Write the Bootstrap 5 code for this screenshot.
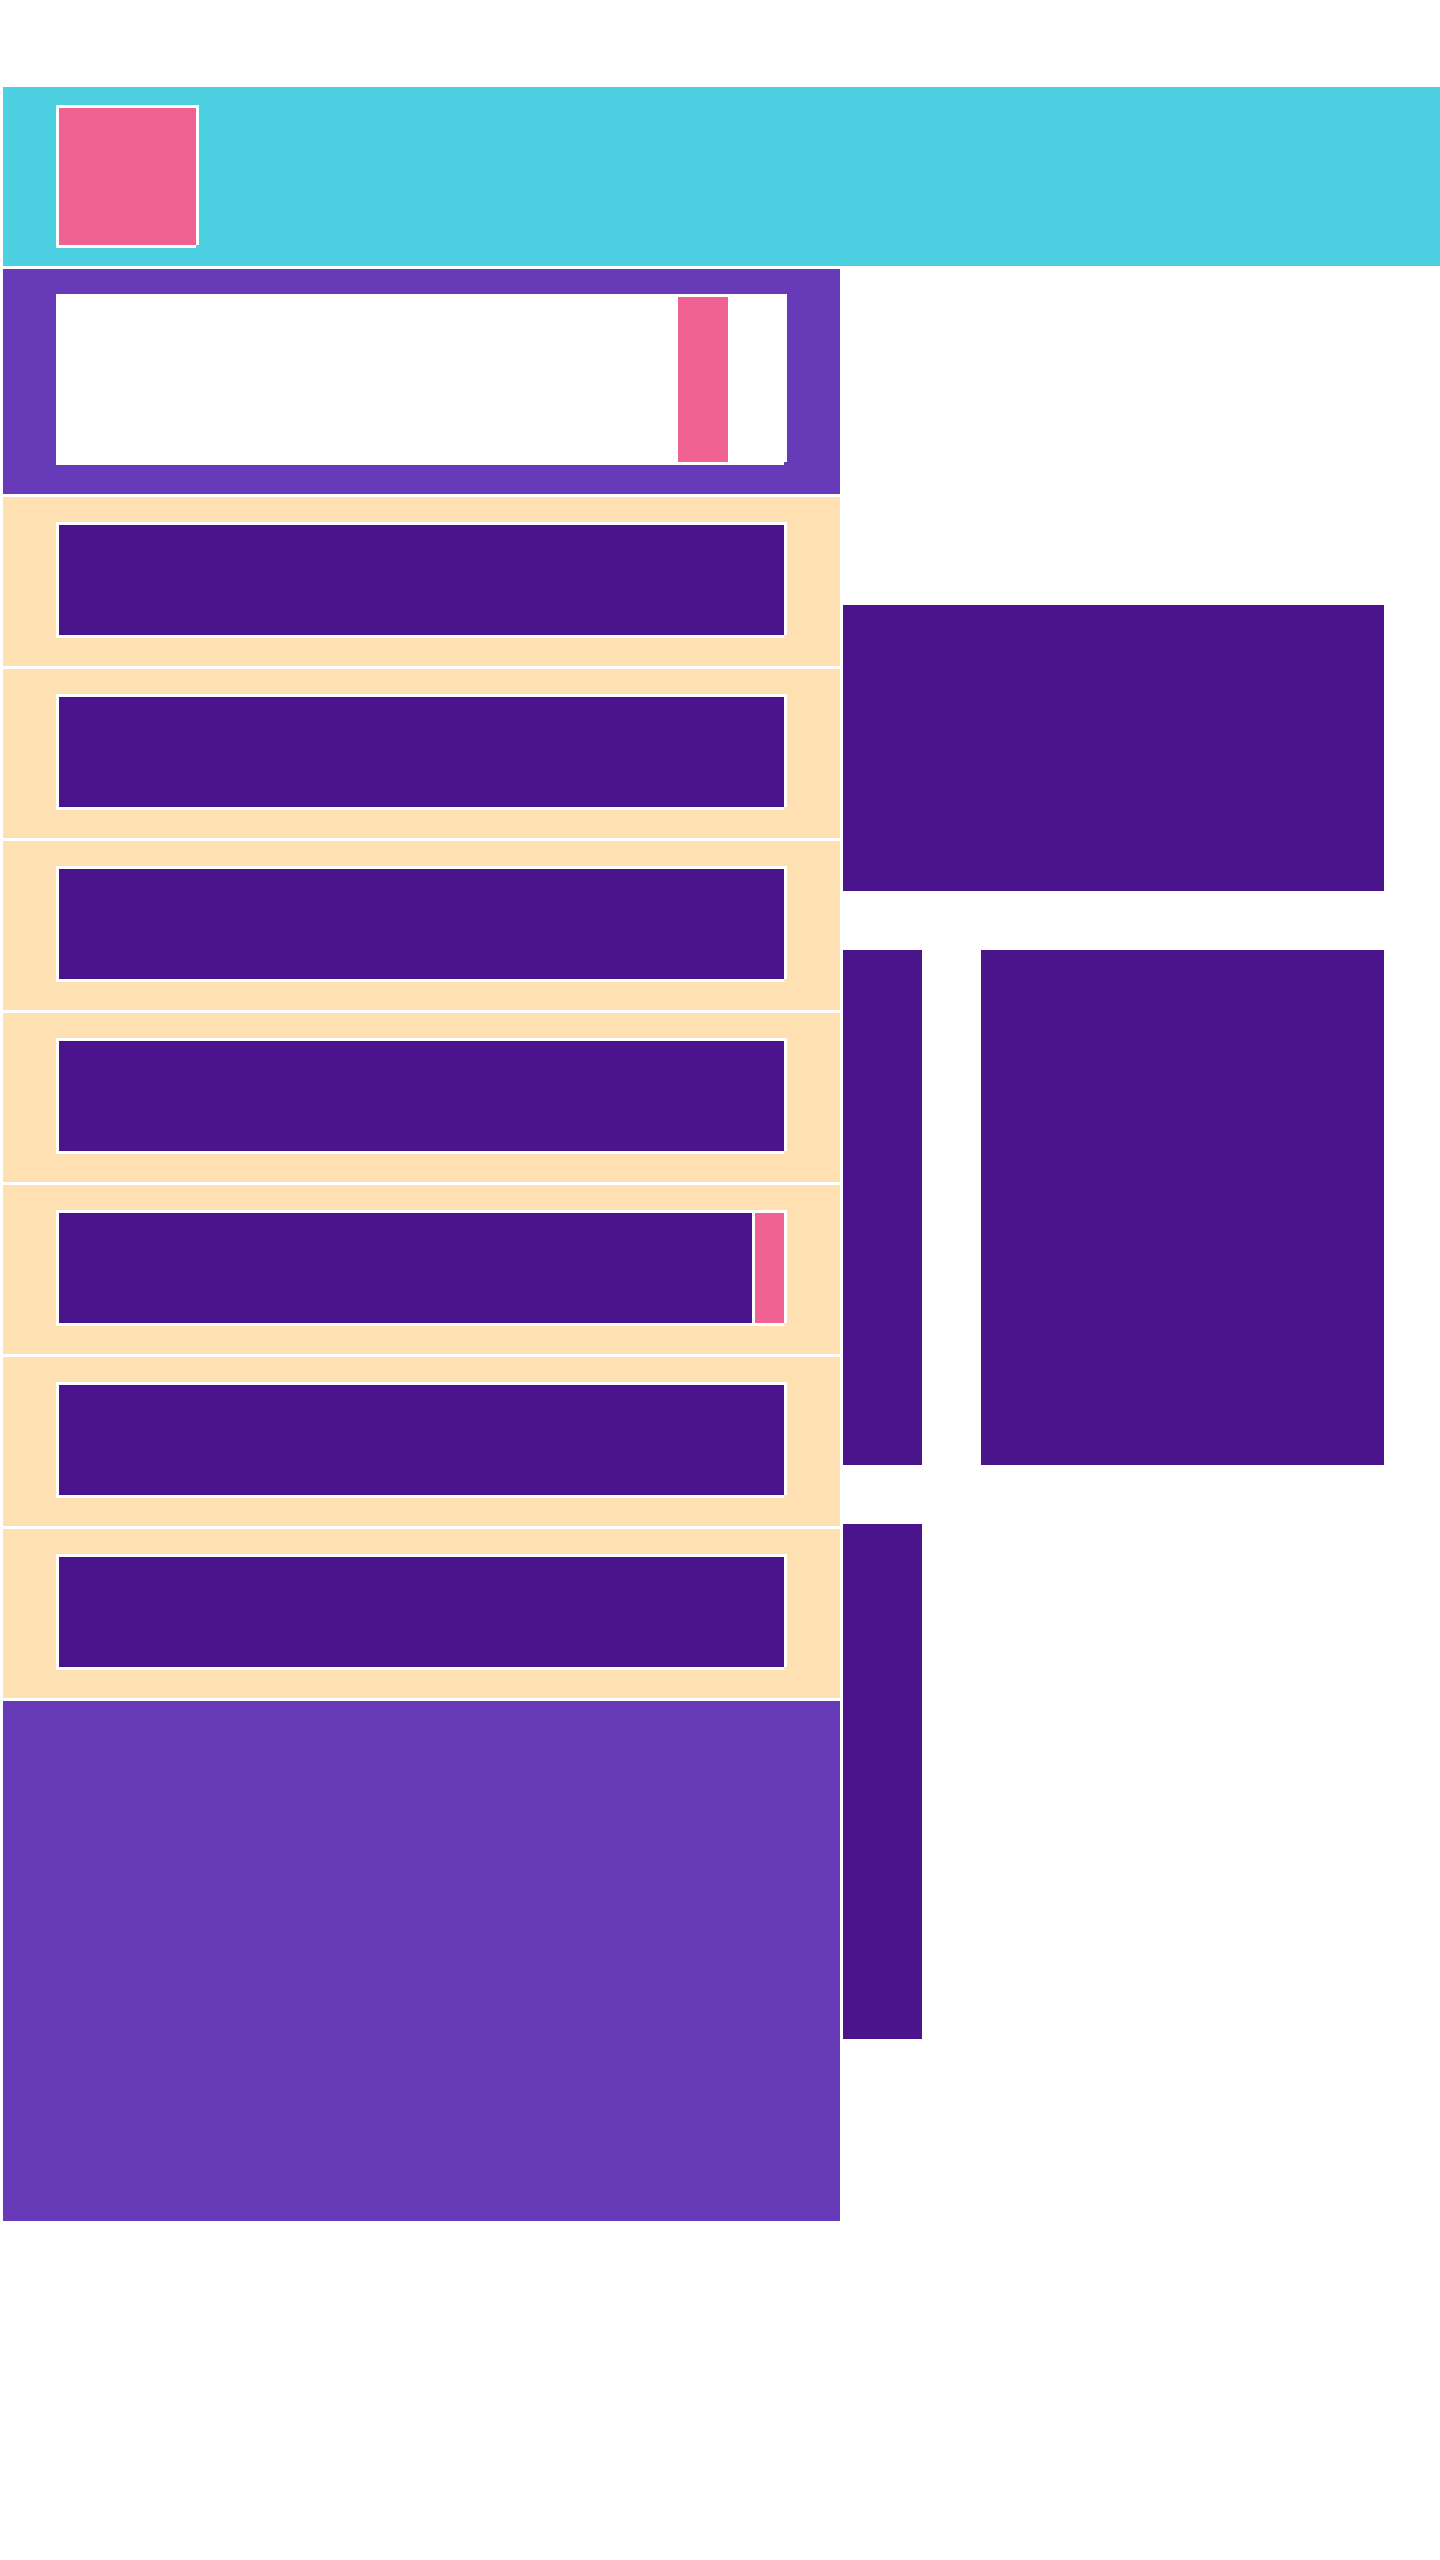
<!DOCTYPE html>
<html lang="en">
<head>
<meta charset="utf-8">
<meta name="viewport" content="width=device-width, initial-scale=1">
<title>Layout blocks</title>
<link href="https://cdn.jsdelivr.net/npm/bootstrap@5.3.0/dist/css/bootstrap.min.css" rel="stylesheet">
<style>
  :root {
    --line: 3px;
    --cyan: #4dd0e1;
    --pink: #f06292;
    --violet: #673ab7;
    --indigo: #4a148c;
    --peach: #ffe0b2;
  }
  body { background: #fff; font-family: "Liberation Sans", sans-serif; }
  .page { padding-top: 87px; }
  .fill-cyan { background: var(--cyan); }
  .fill-pink { background: var(--pink); }
  .fill-violet { background: var(--violet); }
  .fill-indigo { background: var(--indigo); }
  .fill-peach { background: var(--peach); }

  /* White outline whose bottom right corner stays open */
  .outlined {
    box-shadow: -3px -3px #fff, 3px -3px #fff, -3px 3px #fff, 3px 0 #fff, 0 3px #fff;
  }

  .topbar { margin-left: var(--line); padding: 21px 56px; }
  .brand-block { width: 137px; height: 137px; }

  .stack { gap: var(--line); }
  .side { padding-left: var(--line); }
  .profile { padding: 28px 56px 32px; }
  .profile-box { height: 165px; padding-right: 56px; }
  .profile-mark { width: 50px; }
  .menu-row { padding: 28px 56px 31px; }
  .menu-bar { height: 110px; gap: var(--line); }
  .menu-arrow { width: 29px; }
  .side-end { height: 520px; }

  .content { padding: 336px 56px 0 var(--line); }
  .tiles { display: grid; grid-template-columns: 79px 1fr; gap: 59px; }
  .tile { height: 515px; }
  .tile-wide { grid-column: span 2; height: 286px; }
</style>
<script defer src="https://cdn.jsdelivr.net/npm/bootstrap@5.3.0/dist/js/bootstrap.bundle.min.js"></script>
</head>
<body>
<div class="page d-flex flex-column stack">
  <header class="topbar fill-cyan">
    <div class="brand-block fill-pink outlined"></div>
  </header>
  <div class="row g-0">
    <aside class="side col-7 d-flex flex-column stack">
      <div class="profile fill-violet">
        <div class="profile-box bg-white outlined d-flex justify-content-end">
          <div class="profile-mark fill-pink"></div>
        </div>
      </div>
      <ul class="list-unstyled mb-0 d-flex flex-column stack">
        <li class="menu-row fill-peach"><div class="menu-bar fill-indigo outlined"></div></li>
        <li class="menu-row fill-peach"><div class="menu-bar fill-indigo outlined"></div></li>
        <li class="menu-row fill-peach"><div class="menu-bar fill-indigo outlined"></div></li>
        <li class="menu-row fill-peach"><div class="menu-bar fill-indigo outlined"></div></li>
        <li class="menu-row fill-peach">
          <div class="menu-bar bg-white outlined d-flex">
            <div class="fill-indigo flex-grow-1"></div>
            <div class="menu-arrow fill-pink"></div>
          </div>
        </li>
        <li class="menu-row fill-peach"><div class="menu-bar fill-indigo outlined"></div></li>
        <li class="menu-row fill-peach"><div class="menu-bar fill-indigo outlined"></div></li>
      </ul>
      <div class="side-end fill-violet"></div>
    </aside>
    <main class="content col-5">
      <div class="tiles">
        <div class="tile-wide fill-indigo"></div>
        <div class="tile fill-indigo"></div>
        <div class="tile fill-indigo"></div>
        <div class="tile fill-indigo"></div>
      </div>
    </main>
  </div>
</div>
</body>
</html>
